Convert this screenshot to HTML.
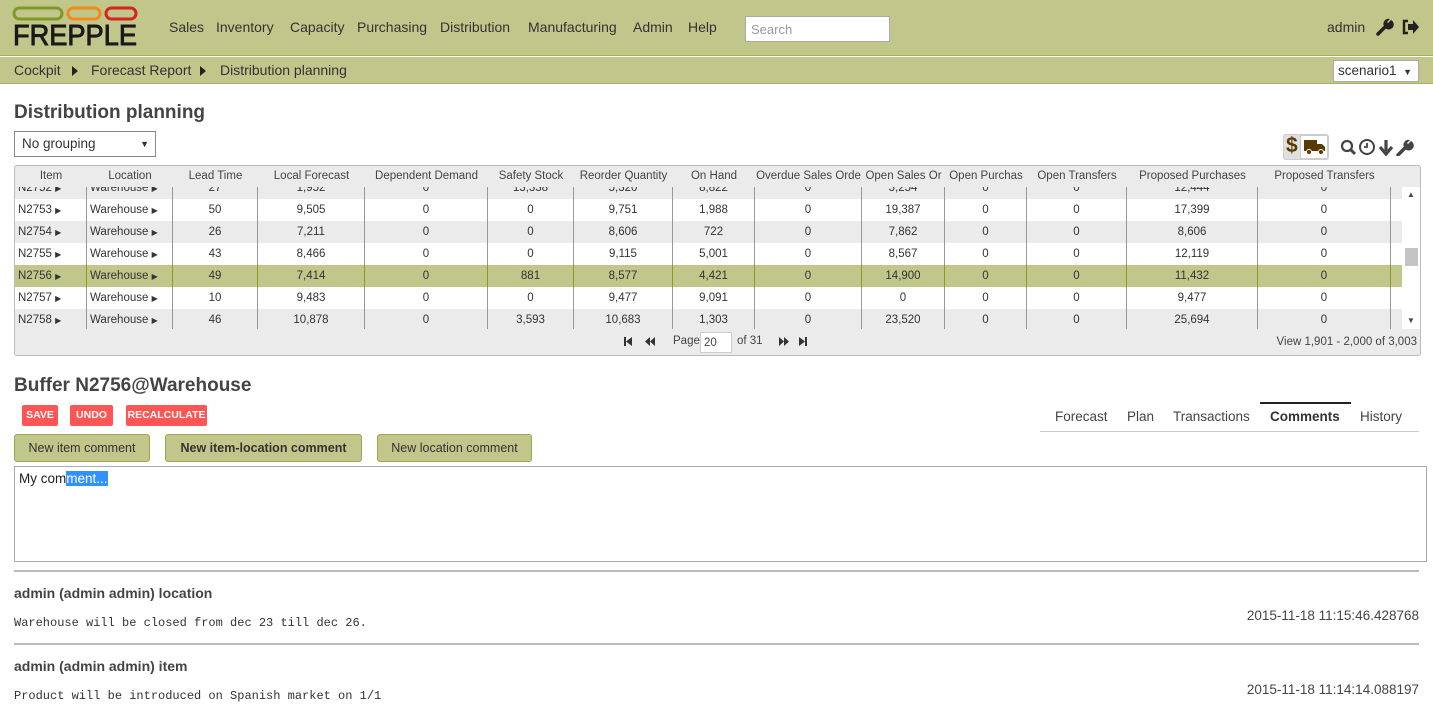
<!DOCTYPE html>
<html><head><meta charset="utf-8"><style>
*{box-sizing:border-box;margin:0;padding:0}
body{width:1433px;height:727px;overflow:hidden;background:#fff;font-family:"Liberation Sans",sans-serif;color:#333;position:relative;font-size:13px}
.a{position:absolute}
.nav{left:0;top:0;width:1433px;height:56px;background:#c1c68b;border-bottom:1px solid #a9b05c}
.nav span{position:absolute;top:19px;font-size:14px;color:#333}
.bc{left:0;top:57px;width:1433px;height:27px;background:#c1c68b;border-bottom:1px solid #a9b05c}
.tbl{left:14px;top:165px;width:1407px;height:191px;border:1px solid #bbb;border-radius:3px;background:#ebebeb;overflow:hidden}
.hd{position:absolute;top:0;height:21px;font-size:11.5px;color:#444;text-align:center;line-height:21px;white-space:nowrap;overflow:hidden}
.body{position:absolute;left:0;top:21px;width:1387px;height:142px;overflow:hidden}
.row{position:absolute;left:0;width:1387px;height:22px}
.c{position:absolute;top:0;height:22px;line-height:22px;font-size:11.5px;text-align:center;border-right:1px solid #999;white-space:nowrap}
.btnr{position:absolute;top:405px;height:21px;background:#f55;color:#fff;font-weight:bold;font-size:10.5px;line-height:21px;text-align:center;border-radius:2px}
.btng{position:absolute;top:434px;height:28px;background:#c1c68b;border:1px solid #9ea450;border-radius:3px;font-size:12.5px;line-height:26px;text-align:center;color:#333}
.tab{position:absolute;top:409px;font-size:13.5px;color:#444}
.hr{position:absolute;left:14px;width:1405px;height:2px;background:#bbb}
.mono{font-family:"Liberation Mono",monospace;font-size:12px;color:#333}
</style></head><body>
<div class="a nav">
 <svg class="a" style="left:12px;top:6px" width="128" height="42">
  <rect x="2" y="2" width="48" height="11" rx="5.5" fill="none" stroke="#7f9a26" stroke-width="3"/>
  <rect x="56" y="2" width="32" height="11" rx="5.5" fill="none" stroke="#f28a1a" stroke-width="3"/>
  <rect x="94" y="2" width="30" height="11" rx="5.5" fill="none" stroke="#d8231e" stroke-width="3"/>
  <text x="1" y="39" font-family="Liberation Sans" font-size="29" fill="#1a1a1a" stroke="#1a1a1a" stroke-width="0.9" textLength="124" lengthAdjust="spacingAndGlyphs">FREPPLE</text>
 </svg>
 <span style="left:169px">Sales</span><span style="left:216px">Inventory</span><span style="left:290px">Capacity</span><span style="left:357px">Purchasing</span><span style="left:440px">Distribution</span><span style="left:528px">Manufacturing</span><span style="left:633px">Admin</span><span style="left:688px">Help</span>
 <div class="a" style="left:745px;top:16px;width:145px;height:26px;background:#fff;border:1px solid #aaa;color:#999;font-size:13px;padding:5px 5px">Search</div>
 <span style="left:1327px">admin</span>
 <svg class="a" style="left:1376px;top:18px" width="18" height="18" viewBox="0 0 18 18"><path d="M2 16 L9 9" stroke="#222" stroke-width="3.5" stroke-linecap="round"/><path d="M8 8 A5 5 0 1 0 15 2 L12 5 L11 4 L14 1 A5 5 0 0 0 8 8Z" fill="#222"/></svg>
 <svg class="a" style="left:1402px;top:19px" width="18" height="16" viewBox="0 0 18 16"><path d="M6 2H2V14H6" fill="none" stroke="#222" stroke-width="2.5"/><path d="M6 5H11V1L17 8L11 15V11H6Z" fill="#222"/></svg>
</div>
<div class="a bc">
 <span class="a" style="left:14px;top:5px;font-size:14px">Cockpit</span>
 <svg class="a" style="left:72px;top:9px" width="6" height="10"><path d="M0 0L6 5L0 10Z" fill="#222"/></svg>
 <span class="a" style="left:91px;top:5px;font-size:14px">Forecast Report</span>
 <svg class="a" style="left:200px;top:9px" width="6" height="10"><path d="M0 0L6 5L0 10Z" fill="#222"/></svg>
 <span class="a" style="left:220px;top:5px;font-size:14px">Distribution planning</span>
 <div class="a" style="left:1333px;top:3px;width:86px;height:22px;background:#fff;border:1px solid #aaa;font-size:13.5px;padding:2px 4px">scenario1 <span style="font-size:9px;position:absolute;right:6px;top:6px">▼</span></div>
</div>
<div class="a" style="left:14px;top:102px;font-size:19px;font-weight:bold;color:#444">Distribution planning</div>
<div class="a" style="left:14px;top:131px;width:142px;height:26px;border:1px solid #888;font-size:13.5px;padding:4px 7px">No grouping<span style="position:absolute;right:6px;top:7px;font-size:9px">▼</span></div>
<div class="a" style="left:1283px;top:134px;width:46px;height:26px;background:#e0e0e0;border:1px solid #ccc;border-radius:3px"></div>
<div class="a" style="left:1300px;top:135px;width:28px;height:24px;background:#fff;border:1px solid #ccc"></div>
<span class="a" style="left:1286px;top:134px;font-size:21px;font-weight:bold;color:#5a3a00">$</span>
<svg class="a" style="left:1304px;top:139px" width="22" height="16" viewBox="0 0 22 16"><path d="M0 1H13V12H0Z M13 5H18L21 8V12H13Z" fill="#5a3a00"/><circle cx="5" cy="13" r="2.5" fill="#5a3a00" stroke="#fff"/><circle cx="17" cy="13" r="2.5" fill="#5a3a00" stroke="#fff"/></svg>
<svg class="a" style="left:1340px;top:139px" width="76" height="17" viewBox="0 0 76 17">
 <circle cx="7" cy="7" r="5" fill="none" stroke="#444" stroke-width="2.2"/><path d="M10.5 10.5L15 15" stroke="#444" stroke-width="3"/>
 <circle cx="27" cy="8" r="7" fill="none" stroke="#444" stroke-width="2"/><path d="M27 4V8H24" fill="none" stroke="#444" stroke-width="1.8"/>
 <path d="M46 1V12 M40 8L46 15L52 8" fill="none" stroke="#444" stroke-width="3.2"/>
 <path d="M58 16L65 9" stroke="#444" stroke-width="3.5" stroke-linecap="round"/><path d="M64 8A5 5 0 1 0 71 2L68 5L67 4L70 1A5 5 0 0 0 64 8Z" fill="#444"/>
</svg>
<div class="a tbl">
 <div class="hd" style="left:0;width:72px">Item</div><div class="hd" style="left:72px;width:86px">Location</div><div class="hd" style="left:158px;width:85px">Lead Time</div><div class="hd" style="left:243px;width:107px">Local Forecast</div><div class="hd" style="left:350px;width:123px">Dependent Demand</div><div class="hd" style="left:473px;width:86px">Safety Stock</div><div class="hd" style="left:559px;width:99px">Reorder Quantity</div><div class="hd" style="left:658px;width:82px">On Hand</div><div class="hd" style="left:740px;width:107px">Overdue Sales Orde</div><div class="hd" style="left:847px;width:83px">Open Sales Or</div><div class="hd" style="left:930px;width:82px">Open Purchas</div><div class="hd" style="left:1012px;width:100px">Open Transfers</div><div class="hd" style="left:1112px;width:131px">Proposed Purchases</div><div class="hd" style="left:1243px;width:133px">Proposed Transfers</div>
 <div class="body" id="b"></div>
 <div class="a" style="left:1387px;top:21px;width:18px;height:142px;background:#fff"></div>
 <span class="a" style="left:1392px;top:24px;font-size:8px;color:#444">▲</span>
 <div class="a" style="left:1390px;top:82px;width:13px;height:18px;background:#c4c4c4"></div>
 <span class="a" style="left:1392px;top:150px;font-size:8px;color:#444">▼</span>
 <svg class="a" style="left:608px;top:170px" width="200" height="12" viewBox="0 0 200 12">
  <g fill="#333"><rect x="1" y="1" width="2" height="9"/><path d="M9 1L3 5.5L9 10Z"/><path d="M27 1L22 5.5L27 10Z M32 1L27 5.5L32 10Z"/>
  <path d="M156 1L161 5.5L156 10Z M161 1L166 5.5L161 10Z"/><path d="M176 1L182 5.5L176 10Z"/><rect x="182" y="1" width="2" height="9"/></g>
 </svg>
 <div class="a" style="left:608px;top:169px;font-size:11.5px;color:#444">
  <span style="position:absolute;left:50px;top:0">Page</span>
  <span style="position:absolute;left:77px;top:-3px;width:32px;height:21px;background:#fff;border:1px solid #ccc;padding:4px 3px">20</span>
  <span style="position:absolute;left:114px;top:0;white-space:nowrap">of 31</span>
 </div>
 <span class="a" style="right:3px;top:170px;font-size:11.5px;color:#444">View 1,901 - 2,000 of 3,003</span>
</div>
<div class="a" style="left:14px;top:375px;font-size:19px;font-weight:bold;color:#444">Buffer N2756@Warehouse</div>
<div class="btnr" style="left:22px;width:36px">SAVE</div>
<div class="btnr" style="left:70px;width:43px">UNDO</div>
<div class="btnr" style="left:126px;width:81px">RECALCULATE</div>
<div class="a" style="left:1040px;top:431px;width:379px;height:1px;background:#ccc"></div>
<div class="a" style="left:1260px;top:402px;width:91px;height:2px;background:#222"></div>
<span class="tab" style="left:1055px">Forecast</span><span class="tab" style="left:1127px">Plan</span><span class="tab" style="left:1173px">Transactions</span><span class="tab" style="left:1270px;font-weight:bold;color:#333">Comments</span><span class="tab" style="left:1360px">History</span>
<div class="btng" style="left:14px;width:136px">New item comment</div>
<div class="btng" style="left:165px;width:197px;font-weight:bold">New item-location comment</div>
<div class="btng" style="left:377px;width:155px">New location comment</div>
<div class="a" style="left:14px;top:466px;width:1413px;height:96px;border:1px solid #aaa;font-size:13.5px;padding:4px 4px;color:#222">My com<span style="background:#3390ff;color:#fff">ment...</span></div>
<div class="hr" style="top:570px"></div>
<div class="a" style="left:14px;top:585px;font-size:14px;font-weight:bold;color:#444">admin (admin admin) location</div>
<div class="a mono" style="left:14px;top:616px">Warehouse will be closed from dec 23 till dec 26.</div>
<div class="a" style="right:14px;top:608px;font-size:13.5px;color:#444">2015-11-18 11:15:46.428768</div>
<div class="hr" style="top:643px"></div>
<div class="a" style="left:14px;top:658px;font-size:14px;font-weight:bold;color:#444">admin (admin admin) item</div>
<div class="a mono" style="left:14px;top:689px">Product will be introduced on Spanish market on 1/1</div>
<div class="a" style="right:14px;top:682px;font-size:13.5px;color:#444">2015-11-18 11:14:14.088197</div>
<script>
var W=[[0,72],[72,86],[158,85],[243,107],[350,123],[473,86],[559,99],[658,82],[740,107],[847,83],[930,82],[1012,100],[1112,131],[1243,133]];
var D=[["N2752","27","1,952","0","13,338","5,320","8,822","0","3,254","0","0","12,444","0"],
["N2753","50","9,505","0","0","9,751","1,988","0","19,387","0","0","17,399","0"],
["N2754","26","7,211","0","0","8,606","722","0","7,862","0","0","8,606","0"],
["N2755","43","8,466","0","0","9,115","5,001","0","8,567","0","0","12,119","0"],
["N2756","49","7,414","0","881","8,577","4,421","0","14,900","0","0","11,432","0"],
["N2757","10","9,483","0","0","9,477","9,091","0","0","0","0","9,477","0"],
["N2758","46","10,878","0","3,593","10,683","1,303","0","23,520","0","0","25,694","0"]];
var h="";
D.forEach(function(r,i){
 var bg=i==4?"#c1c68b":(i%2?"#fff":"#ebebeb");
 h+='<div class="row" style="top:'+(-10+22*i)+'px;background:'+bg+'">';
 var v=[r[0]+' <span style="font-size:8px">▶</span>','Warehouse <span style="font-size:8px">▶</span>'].concat(r.slice(1));
 v.forEach(function(t,j){
  var al=j<2?'text-align:left;padding-left:3px;':'';
  h+='<div class="c" style="left:'+W[j][0]+'px;width:'+W[j][1]+'px;'+al+(i==4?'border-color:#8a9a20':'')+'">'+t+'</div>';
 });
 h+='</div>';
});
document.getElementById("b").innerHTML=h;
</script>
</body></html>
